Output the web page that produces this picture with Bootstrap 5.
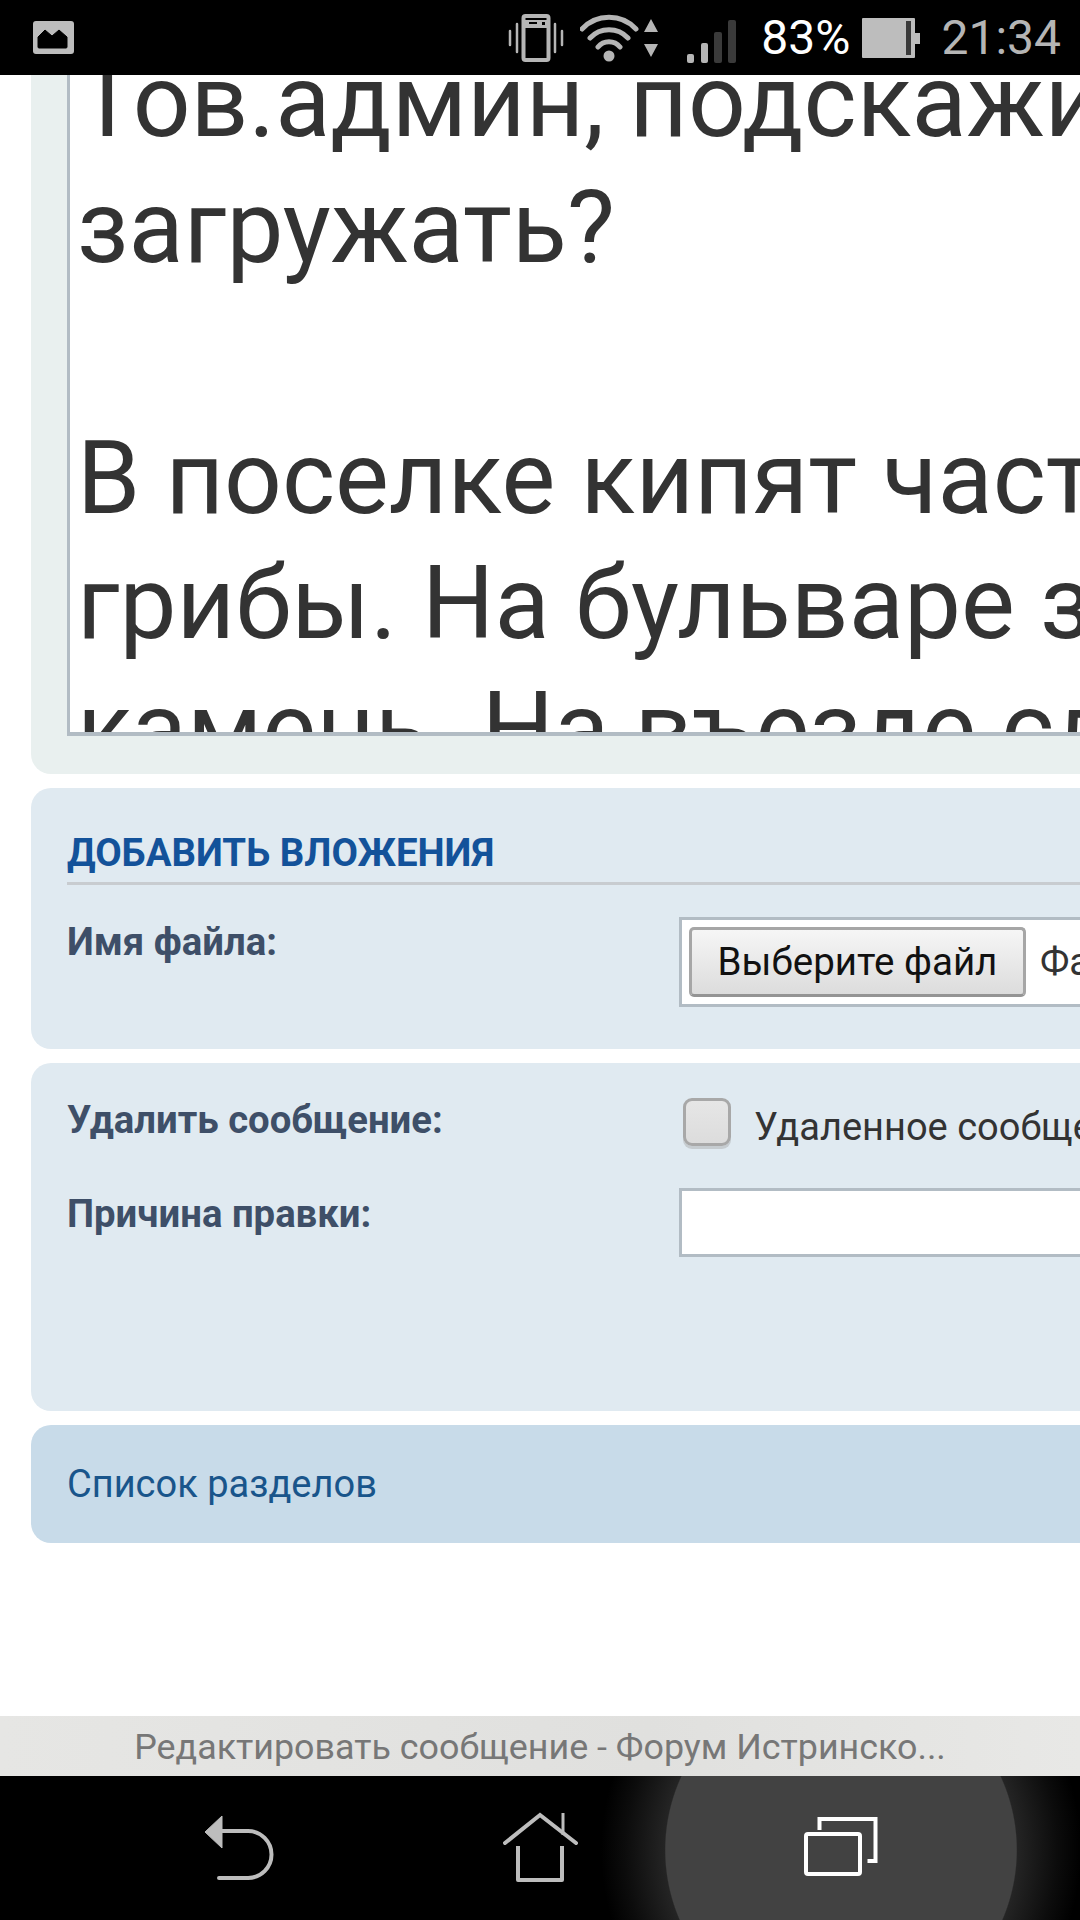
<!DOCTYPE html>
<html lang="ru">
<head>
<meta charset="UTF-8">
<title>Редактировать сообщение</title>
<link href="https://cdn.jsdelivr.net/npm/bootstrap@5.3.0/dist/css/bootstrap.min.css" rel="stylesheet">
<style>
html, body { margin: 0; background: #fff; }
body { width: 1080px; height: 1920px; overflow: hidden; font-family: Roboto, "Liberation Sans", sans-serif; }
.status-bar { height: 75px; background: #000; flex: none; padding: 0 19px 0 33px; position: relative; z-index: 2; }
.status-bar svg { display: block; flex: none; }
.wifi-icon { margin-left: 16px; }
.signal-icon { margin-left: 26px; }
.status-pct { font-size: 48px; line-height: 1; color: #fff; margin-left: 23px; margin-right: 12px; }
.status-time { font-size: 48px; line-height: 1; color: #b5b5b5; margin-left: 21px; }
.page-area { flex: 1 1 auto; min-height: 0; overflow: hidden; padding-left: 31px; }
.page-inner { width: 1400px; }
.edit-panel { background: #e9f0ef; height: 699px; padding: 0 0 38px 36px; border-bottom-left-radius: 20px; }
.msg-box { height: 100%; overflow: hidden; background: #fff; border-left: 3px solid #b2bcc4; border-bottom: 4px solid #b2bcc4; padding-left: 7px; }
.msg-text { margin-top: -36px; font-size: 101.500px; line-height: 125.500px; color: #333; white-space: pre; }
.blue-panel { background: #e0eaf1; border-radius: 20px 0 0 20px; margin-top: 14px; padding-left: 36px; }
.attach-panel { height: 261px; padding-top: 43px; }
.attach-title { font-family: Roboto, sans-serif; font-weight: 700; font-size: 38.400px; line-height: 44px; color: #13529a; border-bottom: 3px solid #c8ccd0; padding-bottom: 7px; margin: 0 0 32px; text-transform: uppercase; }
.field-label { width: 612px; flex: none; font-weight: 700; font-size: 38.300px; line-height: 44px; color: #3e4f68; }
.attach-panel .field-label { padding-top: 3px; }
.file-box { background: #fff; border: 3px solid #b2bcc4; height: 90px; padding: 7px 7px; width: 700px; }
.file-btn { height: 70px; width: 337px; padding: 0; border: 3px solid #a6a6a6; border-bottom-color: #949494; border-radius: 5px; background: linear-gradient(#f6f6f6, #dcdcdc); color: #111; font-size: 38.500px; line-height: 1; }
.file-btn:hover { background: linear-gradient(#f6f6f6, #dcdcdc); border-color: #a6a6a6; color: #111; }
.file-none { font-size: 38px; color: #333; margin-left: 14px; white-space: nowrap; }
.edit-options { height: 348px; padding-top: 35px; }
.fake-check { width: 48px; height: 48px; flex: none; margin: 0 4px; border: 3px solid #a8a8a8; border-radius: 9px; background: linear-gradient(#e6e6e6, #dcdcdc); box-shadow: 0 3px 0 #c6ccd0; appearance: none; }
.check-text { font-size: 38px; line-height: 54px; padding-top: 2px; color: #333; margin-left: 19px; white-space: nowrap; }
.reason-row { margin-top: 34px; }
.reason-row .field-label { padding-top: 4px; }
.reason-input { height: 69px; width: 700px; border: 3px solid #b2bcc4; background: #fff; }
.nav-panel { background: #c8dbe9; height: 118px; font-size: 38px; color: #19558b; }
.nav-panel a { color: inherit; text-decoration: none; }
.title-strip { height: 60px; flex: none; padding-top: 3px; background: linear-gradient(90deg, #e6e6e4, #e0e0de 60%, #e8e8e6); color: #777; font-size: 35.850px; }
.soft-nav { height: 144px; flex: none; background: #000; position: relative; overflow: hidden; }
.soft-nav-key { width: 301px; padding: 0 0 2px 2px; position: relative; }
.press-glow { position: absolute; left: 601px; top: -166px; width: 480px; height: 480px; border-radius: 50%; background: radial-gradient(circle closest-side, #424242 0, #424242 73%, #242424 73.5%, #0c0c0c 90%, rgba(0,0,0,0) 100%); }
</style>
</head>
<body class="d-flex flex-column">

<div class="status-bar d-flex align-items-center">
  <svg width="41" height="33" viewBox="0 0 41 33"><rect width="41" height="33" rx="3" fill="#bdbdbd"/><path d="M5 26V16l7-7 7 6 7-6 8 7v10a1 1 0 0 1-1 1H6a1 1 0 0 1-1-1z" fill="#000" stroke="#000" stroke-linejoin="round"/></svg>
  <div class="ms-auto d-flex align-items-center">
    <svg width="56" height="48" viewBox="0 0 56 48" fill="none" stroke="#b5b5b5"><rect x="15.500" y="2" width="25" height="44" rx="2" stroke-width="4"/><rect x="15" y="6" width="26" height="8" fill="#b5b5b5" stroke="none"/><rect x="21" y="8" width="8" height="2" fill="#000" stroke="none"/><rect x="34" y="8" width="3" height="3" fill="#000" stroke="none"/><path d="M9 10v28M2 17v14M47 10v28M54 17v14" stroke-width="2.500" stroke-linecap="round"/></svg>
    <svg class="wifi-icon" width="80" height="48" viewBox="0 0 80 48" fill="none" stroke="#b5b5b5"><path d="M2 15a37 37 0 0 1 54 0M10 24a26 26 0 0 1 38 0M18 33a14 14 0 0 1 22 0" stroke-width="5" stroke-linecap="round"/><circle cx="29" cy="42" r="5.500" fill="#b5b5b5" stroke="none"/><path d="M64 18l7-13 7 13zM64 30l7 13 7-13z" fill="#b5b5b5" stroke="none"/></svg>
    <svg class="signal-icon" width="52" height="50" viewBox="0 0 52 50"><rect x="1" y="41" width="7" height="9" rx="2" fill="#b5b5b5"/><rect x="15" y="30" width="7" height="20" rx="2" fill="#b5b5b5"/><rect x="28" y="19" width="8" height="31" rx="2" fill="#3a3a3a"/><rect x="42" y="7" width="8" height="43" rx="2" fill="#3a3a3a"/></svg>
    <span class="status-pct">83%</span>
    <svg width="58" height="40" viewBox="0 0 58 40"><rect width="53" height="40" rx="1" fill="#bdbdbd"/><rect x="44" y="3" width="5" height="34" fill="#3a3a3a"/><rect x="53" y="15" width="5" height="11" fill="#bdbdbd"/></svg>
    <span class="status-time">21:34</span>
  </div>
</div>

<div class="page-area">
  <div class="page-inner">
    <div class="edit-panel">
      <div class="msg-box">
        <div class="msg-text">Тов.админ, подскажите, куда
загружать?

В поселке кипят частные стройки как
грибы. На бульваре завозят
камень. На въезде сломали забор</div>
      </div>
    </div>

    <div class="blue-panel attach-panel">
      <h2 class="attach-title">Добавить вложения</h2>
      <div class="d-flex">
        <div class="field-label">Имя файла:</div>
        <div class="file-box d-flex align-items-center">
          <button type="button" class="btn file-btn">Выберите файл</button>
          <span class="file-none">Файл не выбран</span>
        </div>
      </div>
    </div>

    <div class="blue-panel edit-options">
      <div class="d-flex">
        <div class="field-label">Удалить сообщение:</div>
        <input class="fake-check" type="checkbox" aria-label="Удалить сообщение">
        <span class="check-text">Удаленное сообщение</span>
      </div>
      <div class="d-flex reason-row">
        <div class="field-label">Причина правки:</div>
        <div class="reason-input"></div>
      </div>
    </div>

    <div class="blue-panel nav-panel d-flex align-items-center"><a href="#">Список разделов</a></div>
  </div>
</div>

<div class="title-strip d-flex align-items-center justify-content-center">Редактировать сообщение - Форум Истринско...</div>

<div class="soft-nav d-flex justify-content-center">
  <div class="press-glow"></div>
  <div class="soft-nav-key d-flex align-items-center justify-content-center">
    <svg width="70" height="66" viewBox="0 0 70 66" fill="none" stroke="#bdbdbd"><path d="M0 18L17 2v32z" fill="#bdbdbd" stroke="#bdbdbd" stroke-width="1" stroke-linejoin="round"/><path d="M17 17H43a23.500 23.500 0 0 1 0 47H14" stroke-width="4" stroke-linecap="round"/></svg>
  </div>
  <div class="soft-nav-key d-flex align-items-center justify-content-center">
    <svg width="76" height="70" viewBox="0 0 76 70" fill="none" stroke="#bdbdbd"><path d="M2 31L37 3l36 28" stroke-width="4" stroke-linecap="round"/><path d="M60 1v22" stroke-width="3"/><path d="M15 34v34h44V34" stroke-width="4" stroke-linejoin="round"/></svg>
  </div>
  <div class="soft-nav-key d-flex align-items-center justify-content-center">
    <svg width="76" height="60" viewBox="0 0 76 60" fill="none" stroke="#fff" stroke-width="4"><rect x="2" y="17" width="54" height="40" rx="2"/><path d="M15.500 13V2h56v42h-8"/></svg>
  </div>
</div>

</body>
</html>
